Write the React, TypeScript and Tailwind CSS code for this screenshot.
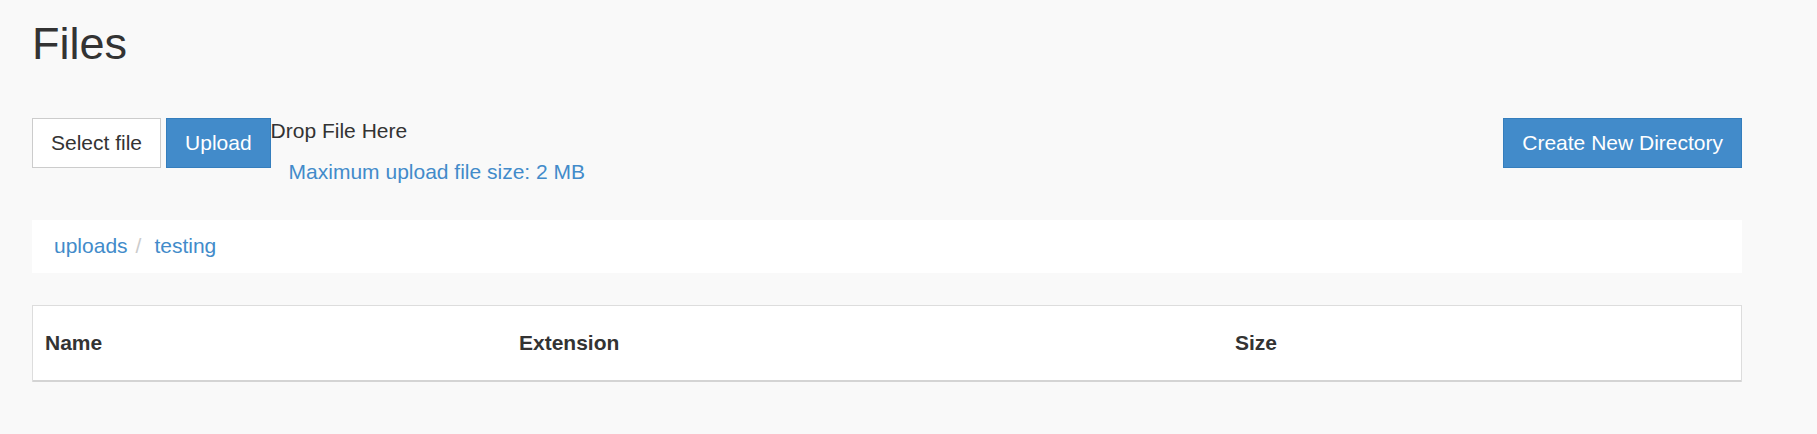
export default function App() {
  return (
    <div className="min-h-screen bg-[#f9f9f9] font-['Liberation_Sans',Arial,sans-serif] text-[#333]">
      <div className="ml-[32px] w-[1710px]">
        <h1 className="pt-[19px] text-[45px] leading-[1.1] font-normal">Files</h1>

        <div className="mt-[49px] flex items-start justify-between">
          <div className="flex items-start">
            <button className="h-[50px] border border-[#ccc] bg-white px-[18px] text-[21px] leading-[30px] text-[#333]">
              Select file
            </button>
            <button className="ml-[5px] h-[50px] border border-[#357ebd] bg-[#428bca] px-[18px] text-[21px] leading-[30px] text-white">
              Upload
            </button>
            <div className="-mt-[2px] text-[21px] leading-[30px]">
              <div>Drop File Here</div>
              <p className="mt-[11px] pl-[18px] text-[#428bca]">Maximum upload file size: 2 MB</p>
            </div>
          </div>
          <button className="h-[50px] border border-[#357ebd] bg-[#428bca] px-[18px] text-[21px] leading-[30px] text-white">
            Create New Directory
          </button>
        </div>

        <div className="mt-[33px] flex h-[53px] items-center bg-white px-[22px] text-[21px] leading-[30px]">
          <a className="text-[#428bca]">uploads</a>
          <span className="pl-[8px] pr-[13px] text-[#ccc]">/</span>
          <a className="text-[#428bca]">testing</a>
        </div>

        <div className="mt-[32px] border-x border-t border-[#ddd] bg-white">
          <div className="flex border-b-2 border-[#d4d4d4] text-[21px] leading-[30px] font-bold">
            <div className="w-[474px] px-[12px] py-[22px]">Name</div>
            <div className="w-[716px] px-[12px] py-[22px]">Extension</div>
            <div className="flex-1 px-[12px] py-[22px]">Size</div>
          </div>
        </div>
      </div>
    </div>
  )
}
